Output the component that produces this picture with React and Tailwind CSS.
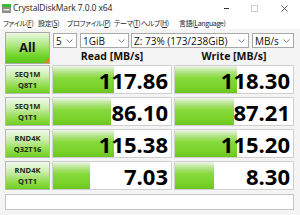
import React from "react";

const rows = [
  { a: "SEQ1M", b: "Q8T1", r: "117.86", rw: 61, w: "118.30", ww: 62 },
  { a: "SEQ1M", b: "Q1T1", r: "86.10", rw: 58, w: "87.21", ww: 59 },
  { a: "RND4K", b: "Q32T16", r: "115.38", rw: 61, w: "115.20", ww: 62 },
  { a: "RND4K", b: "Q1T1", r: "7.03", rw: 37, w: "8.30", ww: 39 },
];

function Chevron() {
  return (
    <svg width="7" height="4" viewBox="0 0 7 4" className="shrink-0">
      <path d="M0.5 0.5 L3.5 3.3 L6.5 0.5" fill="none" stroke="#6b6b6b" strokeWidth="0.9" />
    </svg>
  );
}

function Select({ w, ml, children }) {
  return (
    <div
      className={`${w} ${ml} h-[15px] bg-white border border-[#a9a9a9] flex items-center justify-between pl-[2px] pr-[3px] text-[10px] leading-none text-[#111]`}
    >
      <span className="whitespace-nowrap">{children}</span>
      <Chevron />
    </div>
  );
}

function Cell({ value, width }) {
  return (
    <div className="relative h-[29px] bg-white border border-[#cfcfcf]">
      <div
        className="absolute left-0 top-0 bottom-0 bg-[linear-gradient(to_bottom,#eef5e9_0%,#b2e486_22%,#86d93a_45%,#7bd22a_78%,#6cc41e_100%)]"
        style={{ width: `${width}px` }}
      />
      <div className="relative h-full flex items-center justify-end pr-[3px] text-[22px] font-bold leading-none text-black">
        {value}
      </div>
    </div>
  );
}

function Label({ a, b }) {
  return (
    <div className="h-[29px] border border-[#b9b9b9] bg-[linear-gradient(to_bottom,#f3faee_0%,#cdeeb0_35%,#93dd52_72%,#6fcf22_100%)] flex flex-col items-center justify-center text-[7.5px] font-bold leading-[11px] text-[#1b2a12]">
      <span>{a}</span>
      <span>{b}</span>
    </div>
  );
}

function MenuItem({ w, label, k }) {
  return (
    <span className={`${w} shrink-0 whitespace-nowrap`}>
      {label}(<span className="underline">{k}</span>)
    </span>
  );
}

export default function App() {
  return (
    <div className="w-[300px] h-[215px] overflow-hidden bg-[#f4f4f4] flex flex-col font-['Open_Sans','Noto_Sans_CJK_JP',sans-serif] text-[#111]">
      {/* Title bar */}
      <div className="h-[16px] bg-white flex items-center shrink-0">
        <svg width="9" height="9" viewBox="0 0 9 9" className="ml-[2px]">
          <rect x="0" y="0" width="9" height="3" fill="#3cb83c" />
          <rect x="0" y="3" width="9" height="6" fill="#8c8c8c" />
          <rect x="1.5" y="5" width="6" height="1.5" fill="#e8e8e8" />
        </svg>
        <span className="ml-[2px] text-[8.5px] leading-none tracking-[-0.1px] text-[#222]">
          CrystalDiskMark 7.0.0 x64
        </span>
        <div className="ml-auto flex items-center">
          <div className="w-[5px] h-px bg-[#333] mr-[22px]" />
          <div className="w-[7px] h-[7px] border border-[#cdcdcd] mr-[23px]" />
          <svg width="7" height="7" viewBox="0 0 7 7" className="mr-[12px]">
            <path d="M0.5 0.5 L6.5 6.5 M6.5 0.5 L0.5 6.5" stroke="#333" strokeWidth="0.8" />
          </svg>
        </div>
      </div>

      {/* Menu bar */}
      <div className="h-[13px] bg-white flex items-center pl-[3px] text-[7px] leading-[10px] tracking-[-0.35px] text-[#222] font-['Noto_Sans_CJK_JP',sans-serif] [font-feature-settings:'palt'] shrink-0">
        <MenuItem w="w-[35px]" label="ファイル" k="F" />
        <MenuItem w="w-[29px]" label="設定" k="S" />
        <MenuItem w="w-[47px]" label="プロファイル" k="P" />
        <MenuItem w="w-[27px]" label="テーマ" k="T" />
        <MenuItem w="w-[38px]" label="ヘルプ" k="H" />
        <span className="whitespace-nowrap">
          言語(<span className="underline">L</span>anguage)
        </span>
      </div>

      {/* Content */}
      <div className="pl-[5px] pt-[3px] flex flex-col">
        <div className="flex gap-x-[2px]">
          <div className="relative w-[45px] h-[32px] border border-[#a8a8a8] bg-[linear-gradient(to_bottom,#eaf8e0_0%,#b6ea8e_35%,#72d52c_75%,#5cc81a_100%)] flex items-center justify-center text-[12.5px] font-bold text-[#111]">
            All
            <div className="absolute right-0 bottom-0 w-0 h-0 border-l-[5px] border-l-transparent border-b-[5px] border-b-[#ee7d1e]" />
          </div>
          <div className="flex flex-col">
            <div className="h-[16px] pt-[1px] flex">
              <Select w="w-[24px]" ml="ml-[1px]">5</Select>
              <Select w="w-[49px]" ml="ml-[3px]">1GiB</Select>
              <Select w="w-[118px]" ml="ml-[2px]">Z: 73% (173/238GiB)</Select>
              <Select w="w-[42px]" ml="ml-[3px]">MB/s</Select>
            </div>
            <div className="h-[16px] grid grid-cols-[120px_120px] gap-x-[2px] items-center text-[10.5px] font-bold leading-none">
              <div className="text-center">Read [MB/s]</div>
              <div className="text-center">Write [MB/s]</div>
            </div>
          </div>
        </div>

        <div className="mt-[1px] grid grid-cols-[45px_120px_120px] gap-x-[2px] gap-y-[3px]">
          {rows.map((r, i) => (
            <React.Fragment key={i}>
              <Label a={r.a} b={r.b} />
              <Cell value={r.r} width={r.rw} />
              <Cell value={r.w} width={r.ww} />
            </React.Fragment>
          ))}
        </div>

        <div className="mt-[4px] w-[289px] h-[16px] bg-white border border-[#c4c4c4]" />
      </div>
    </div>
  );
}
